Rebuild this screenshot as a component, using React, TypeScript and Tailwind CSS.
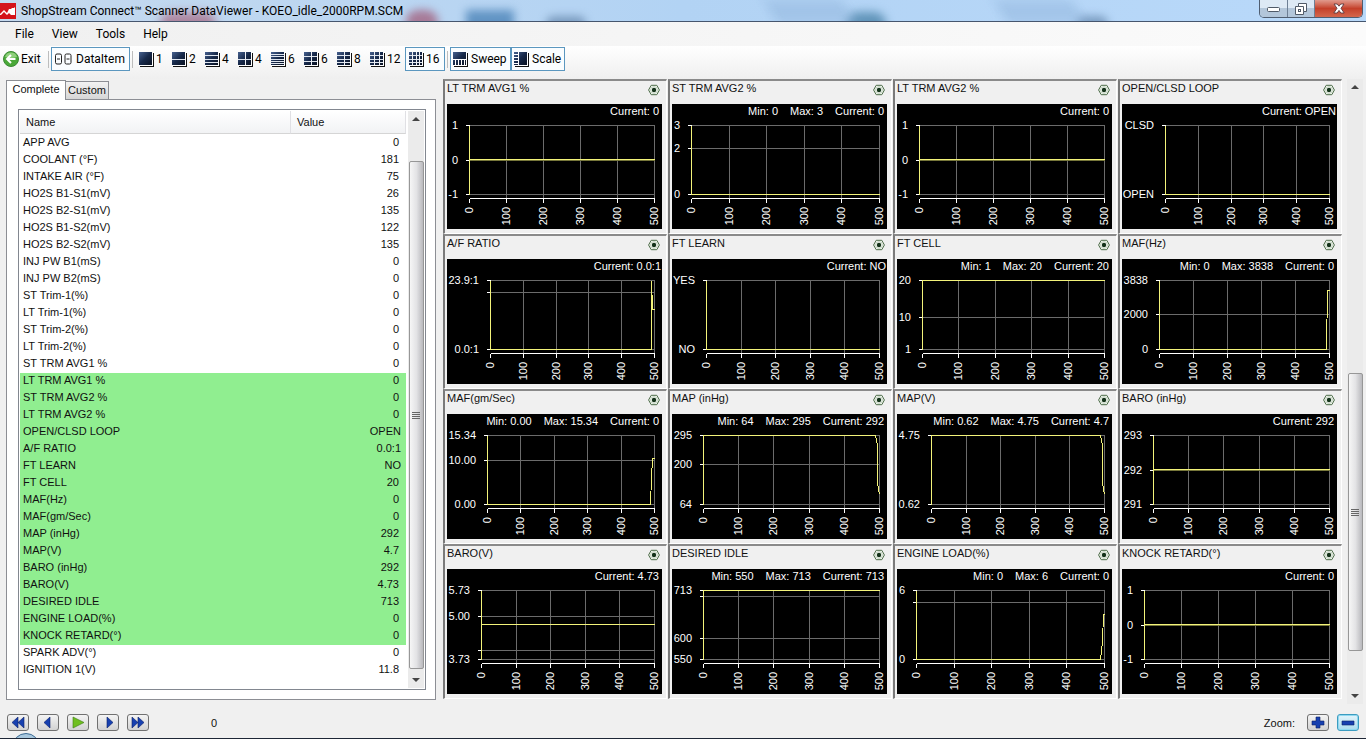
import { useState } from "react";
import type { ReactNode } from "react";

interface Tick {
  y: number;
  label?: string;
}

interface ChartData {
  title: string;
  min?: string;
  max?: string;
  current: string;
  left: number;
  ticks: Tick[];
  trace: string;
  thick?: boolean;
}

const RIGHT = 207;

const CHARTS: ChartData[] = [
  { title: "LT TRM AVG1 %", current: "0", left: 22, ticks: [{ y: 21, label: "1" }, { y: 56, label: "0" }, { y: 90, label: "-1" }], trace: "H207", thick: true },
  { title: "ST TRM AVG2 %", min: "0", max: "3", current: "0", left: 19, ticks: [{ y: 21, label: "3" }, { y: 44, label: "2" }, { y: 90, label: "0" }], trace: "V90 H207" },
  { title: "LT TRM AVG2 %", current: "0", left: 22, ticks: [{ y: 21, label: "1" }, { y: 56, label: "0" }, { y: 90, label: "-1" }], trace: "H207", thick: true },
  { title: "OPEN/CLSD LOOP", current: "OPEN", left: 43, ticks: [{ y: 21, label: "CLSD" }, { y: 90, label: "OPEN" }], trace: "V90 H207" },
  { title: "A/F RATIO", current: "0.0:1", left: 43, ticks: [{ y: 21, label: "23.9:1" }, { y: 33 }, { y: 90, label: "0.0:1" }], trace: "V90 H204 V21 V36 H205 V50 H207" },
  { title: "FT LEARN", current: "NO", left: 34, ticks: [{ y: 21, label: "YES" }, { y: 90, label: "NO" }], trace: "V90 H207" },
  { title: "FT CELL", min: "1", max: "20", current: "20", left: 25, ticks: [{ y: 21, label: "20" }, { y: 58, label: "10" }, { y: 90, label: "1" }], trace: "V21 H207" },
  { title: "MAF(Hz)", min: "0", max: "3838", current: "0", left: 37, ticks: [{ y: 21, label: "3838" }, { y: 55, label: "2000" }, { y: 90, label: "0" }], trace: "V90 H204 L205 31 H207" },
  { title: "MAF(gm/Sec)", min: "0.00", max: "15.34", current: "0", left: 40, ticks: [{ y: 21, label: "15.34" }, { y: 46, label: "10.00" }, { y: 90, label: "0.00" }], trace: "V90 H203 L204 63 L205 44 H207" },
  { title: "MAP (inHg)", min: "64", max: "295", current: "292", left: 31, ticks: [{ y: 21, label: "295" }, { y: 50, label: "200" }, { y: 90, label: "64" }], trace: "V21 H203 L205 31 L205 69 L207 80" },
  { title: "MAP(V)", min: "0.62", max: "4.75", current: "4.7", left: 34, ticks: [{ y: 21, label: "4.75" }, { y: 90, label: "0.62" }], trace: "V21 H203 L205 31 L205 69 L207 80" },
  { title: "BARO (inHg)", current: "292", left: 31, ticks: [{ y: 21, label: "293" }, { y: 56, label: "292" }, { y: 90, label: "291" }], trace: "H207", thick: true },
  { title: "BARO(V)", current: "4.73", left: 34, ticks: [{ y: 21, label: "5.73" }, { y: 47, label: "5.00" }, { y: 81 }, { y: 90, label: "3.73" }], trace: "V55 H207" },
  { title: "DESIRED IDLE", min: "550", max: "713", current: "713", left: 31, ticks: [{ y: 21, label: "713" }, { y: 27 }, { y: 69, label: "600" }, { y: 90, label: "550" }], trace: "V21 H207" },
  { title: "ENGINE LOAD(%)", min: "0", max: "6", current: "0", left: 19, ticks: [{ y: 21, label: "6" }, { y: 33 }, { y: 90, label: "0" }], trace: "V90 H203 L205 72 L206 45 H207" },
  { title: "KNOCK RETARD(°)", current: "0", left: 22, ticks: [{ y: 21, label: "1" }, { y: 56, label: "0" }, { y: 90, label: "-1" }], trace: "H207", thick: true },
];

const ROWS: [string, string][] = [
  ["APP AVG", "0"],
  ["COOLANT (°F)", "181"],
  ["INTAKE AIR (°F)", "75"],
  ["HO2S B1-S1(mV)", "26"],
  ["HO2S B2-S1(mV)", "135"],
  ["HO2S B1-S2(mV)", "122"],
  ["HO2S B2-S2(mV)", "135"],
  ["INJ PW B1(mS)", "0"],
  ["INJ PW B2(mS)", "0"],
  ["ST Trim-1(%)", "0"],
  ["LT Trim-1(%)", "0"],
  ["ST Trim-2(%)", "0"],
  ["LT Trim-2(%)", "0"],
  ["ST TRM AVG1 %", "0"],
  ["LT TRM AVG1 %", "0"],
  ["ST TRM AVG2 %", "0"],
  ["LT TRM AVG2 %", "0"],
  ["OPEN/CLSD LOOP", "OPEN"],
  ["A/F RATIO", "0.0:1"],
  ["FT LEARN", "NO"],
  ["FT CELL", "20"],
  ["MAF(Hz)", "0"],
  ["MAF(gm/Sec)", "0"],
  ["MAP (inHg)", "292"],
  ["MAP(V)", "4.7"],
  ["BARO (inHg)", "292"],
  ["BARO(V)", "4.73"],
  ["DESIRED IDLE", "713"],
  ["ENGINE LOAD(%)", "0"],
  ["KNOCK RETARD(°)", "0"],
  ["SPARK ADV(°)", "0"],
  ["IGNITION 1(V)", "11.8"],
];

const LAYOUTS = [
  { label: "1", rows: 1, cols: 1 },
  { label: "2", rows: 2, cols: 1 },
  { label: "4", rows: 4, cols: 1 },
  { label: "4", rows: 2, cols: 2 },
  { label: "6", rows: 6, cols: 1 },
  { label: "6", rows: 3, cols: 2 },
  { label: "8", rows: 4, cols: 2 },
  { label: "12", rows: 4, cols: 3 },
];

function splits(n: number) {
  return Array.from({ length: n - 1 }, (_, i) => Math.round(((i + 1) * 13) / n));
}

function IconFrame({ children }: { children?: ReactNode }) {
  return (
    <svg width="15" height="15" viewBox="0 0 15 15" shapeRendering="crispEdges" className="shrink-0">
      <defs>
        <linearGradient id="navy" x1="0" y1="0" x2="1" y2="1">
          <stop offset="0" stopColor="#47618f" />
          <stop offset="0.5" stopColor="#17294a" />
          <stop offset="1" stopColor="#0a1222" />
        </linearGradient>
      </defs>
      <rect x="0" y="0" width="13" height="13" fill="url(#navy)" />
      {children}
      <path d="M13.5 0V13.5H0" stroke="#fff" fill="none" />
      <path d="M14.5 1V14.5H1" stroke="#111" fill="none" />
    </svg>
  );
}

function GridIcon({ rows, cols }: { rows: number; cols: number }) {
  return (
    <IconFrame>
      {splits(rows).map((y) => (
        <rect key={`r${y}`} x="0" y={y} width="13" height="1" fill="#dfe5ee" />
      ))}
      {splits(cols).map((x) => (
        <rect key={`c${x}`} x={x} y="0" width="1" height="13" fill="#eef1f6" />
      ))}
    </IconFrame>
  );
}

function HexIcon() {
  return (
    <svg width="12" height="12" viewBox="0 0 12 12">
      <path d="M3.200 1.300H8.800L11.400 6L8.800 10.700H3.200L.6 6Z" fill="#f6faf4" stroke="#4c6b48" />
      <circle cx="6" cy="6" r="3.400" fill="none" stroke="#9db79a" strokeWidth=".6" />
      <circle cx="6" cy="6" r="2.200" fill="#14331a" />
    </svg>
  );
}

function Plot({ chart }: { chart: ChartData }) {
  const { left, ticks, trace, thick } = chart;
  const xs = [0, 1, 2, 3, 4, 5].map((i) => Math.round(left + ((RIGHT - left) * i) / 5));
  const start = thick ? `M${left} 21 V90 M${left} 55` : `M${left} 21 V90`;
  return (
    <svg viewBox="0 14 215 111" className="block w-full" fill="none">
      <g shapeRendering="crispEdges" transform="translate(.5 .5)">
        {xs.slice(1).map((x) => (
          <path key={x} d={`M${x} 21V94`} stroke="#6b6b6b" />
        ))}
        {ticks.map((t) => (
          <path key={t.y} d={`M${left} ${t.y}H${RIGHT}`} stroke="#6b6b6b" />
        ))}
        {ticks.map((t) => (
          <path key={t.y} d={`M${left - 4} ${t.y}H${left}`} stroke="#fff" />
        ))}
        <path d={`M${left} 94H${RIGHT}`} stroke="#fff" />
        {xs.map((x) => (
          <path key={x} d={`M${x} 94V98`} stroke="#fff" />
        ))}
        {thick && <path d={`M${left} 56H${RIGHT}`} stroke="#77773a" />}
        <path d={`${start} ${trace}`} stroke="#f3f37a" />
      </g>
      <g className="fill-white text-[11px]">
        {ticks.map(
          (t) =>
            t.label && (
              <text key={t.y} x={left - 11} y={t.y + 4} textAnchor="end">
                {t.label}
              </text>
            ),
        )}
        {xs.map((x, i) => (
          <text key={x} transform={`translate(${x + 4} 103) rotate(-90)`} textAnchor="end">
            {i * 100}
          </text>
        ))}
      </g>
    </svg>
  );
}

function ChartCell({ chart }: { chart: ChartData }) {
  return (
    <section className="ml-px border-t-2 border-l-2 border-r border-b border-t-[#8a8a8a] border-l-[#7a7a7a] border-r-white border-b-white bg-[#f0f0f0] pr-1 pb-1 pl-0.5">
      <header className="flex h-[23px] items-start justify-between pr-0.5">
        <h2 className="leading-[14px]">{chart.title}</h2>
        <button aria-label={`${chart.title} options`} className="mt-[3px]">
          <HexIcon />
        </button>
      </header>
      <div className="bg-black">
        <div className={`flex h-3.5 justify-end gap-3 leading-[15px] text-white ${/OPEN|NO|:/.test(chart.current) ? "pr-px" : "pr-[3px]"}`}>
          {chart.min && <span>Min: {chart.min}</span>}
          {chart.max && <span>Max: {chart.max}</span>}
          <span>Current: {chart.current}</span>
        </div>
        <Plot chart={chart} />
      </div>
    </section>
  );
}

function Arrow({ down }: { down?: boolean }) {
  return (
    <svg width="8" height="4" viewBox="0 0 8 4">
      <path d={down ? "M0 0H8L4 4Z" : "M0 4H8L4 0Z"} fill="#444" />
    </svg>
  );
}

function ScrollBar({ before, thumb, className }: { before: string; thumb: string; className: string }) {
  return (
    <div className={`flex w-4 shrink-0 flex-col items-center bg-[#ebebeb] ${className}`}>
      <button aria-label="Scroll up" className="flex h-4 w-full shrink-0 items-center justify-center">
        <Arrow />
      </button>
      <div className={before} />
      <div className={`flex w-[15px] flex-col items-center justify-center gap-px rounded-[2px] border border-[#979797] bg-linear-to-r from-[#f6f6f6] via-[#e3e3e5] to-[#b9b9bd] ${thumb}`}>
        <span className="h-px w-2 bg-[#666]" />
        <span className="h-px w-2 bg-[#666]" />
        <span className="h-px w-2 bg-[#666]" />
        <span className="h-px w-2 bg-[#666]" />
      </div>
      <button aria-label="Scroll down" className="mt-auto flex h-4 w-full shrink-0 items-center justify-center">
        <Arrow down />
      </button>
    </div>
  );
}

function TitleBar() {
  return (
    <div className="relative flex h-[22px] items-start overflow-hidden border-b border-[#46566e] bg-linear-to-r from-[#c5d9ee] via-[#b2d3f4] to-[#b9d9fa] font-['Roboto',sans-serif]">
      <div className="absolute top-3 left-40 h-6 w-14 rounded-full bg-[#a0506a]/60 blur-[5px]" />
      <div className="absolute top-2.5 left-[406px] h-6 w-8 rounded-full bg-[#9b3e5c]/60 blur-[4px]" />
      <div className="absolute top-2.5 left-[466px] h-6 w-12 bg-[#3d79b0]/70 blur-[4px]" />
      <div className="absolute top-4 left-[546px] h-4 w-10 rounded-full bg-[#55789f]/60 blur-[4px]" />
      <div className="absolute top-3 left-[846px] h-6 w-10 rounded-full bg-[#3d79a0]/70 blur-[5px]" />
      <div className="absolute top-4 left-[1076px] h-4 w-8 rounded-full bg-[#55789f]/60 blur-[4px]" />
      <div className="absolute top-0 left-[770px] h-6 w-20 skew-x-[30deg] bg-[#8fb4dc]/50 blur-[6px]" />
      <div className="absolute top-0 left-[1000px] h-6 w-20 skew-x-[30deg] bg-[#8fb4dc]/50 blur-[6px]" />
      <svg width="16" height="16" viewBox="0 0 16 16" className="relative mt-[3px] shrink-0">
        <rect width="16" height="16" fill="#d4121a" />
        <path d="M0 11L4 7L7 10L9 6H11L12 5H14L15 4V12H11L9 10L7 12L4 9L1 12H0Z" fill="#fff" />
      </svg>
      <h1 className="relative ml-[5px] text-[12px] leading-[22px] text-black">
        ShopStream Connect™ Scanner DataViewer - KOEO_idle_2000RPM.SCM
      </h1>
      <div className="relative mr-[3px] ml-auto flex h-[18px] overflow-hidden rounded-b-[5px] border border-t-0 border-[#4f5d70]">
        <button aria-label="Minimize" className="flex w-7 items-center justify-center border-r border-[#6d7f95] bg-linear-to-b from-[#dde9f5] from-50% to-[#b3c6da] to-50%">
          <svg width="13" height="6" viewBox="0 0 13 6" className="mt-0.5">
            <rect x=".5" y=".5" width="12" height="4" rx="1" fill="#fff" stroke="#505a68" />
          </svg>
        </button>
        <button aria-label="Restore" className="flex w-[27px] items-center justify-center border-r border-[#6d7f95] bg-linear-to-b from-[#dde9f5] from-50% to-[#b3c6da] to-50%">
          <svg width="12" height="12" viewBox="0 0 12 12" fill="none" stroke="#505a68">
            <path d="M3.500 .5H11.500V8.500H8.500V11.500H.5V3.500H3.500Z" fill="#fff" />
            <path d="M3.500 3.500H8.500V8.500" />
            <rect x="3.500" y="6.500" width="2" height="2" />
          </svg>
        </button>
        <button aria-label="Close" className="flex w-[47px] items-center justify-center bg-linear-to-b from-[#e09a8d] via-[#c4402a] via-50% to-[#d4664c]">
          <svg width="12" height="11" viewBox="0 0 12 11">
            <path d="M1 1H4.200L6 3.200L7.800 1H11L8 5.300L11.200 10H7.800L6 7.400L4.200 10H.8L4 5.300Z" fill="#fff" stroke="#5c3a40" strokeWidth=".9" />
          </svg>
        </button>
      </div>
    </div>
  );
}

function Separator() {
  return <span className="mx-0.5 h-[17px] w-px bg-[#bdbdbd]" />;
}

const TOGGLED = "flex h-6 items-center border border-[#5b97bf] bg-[#fafdff]";

function Toolbar() {
  return (
    <div className="flex h-[33px] items-start bg-linear-to-b from-white to-[#efefef] pt-px pl-[3px] font-['Roboto',sans-serif] text-[12px] text-black">
      <div className="flex h-6 items-center">
        <button className="flex w-[43px] items-center gap-0.5">
          <svg width="16" height="16" viewBox="0 0 16 16" className="shrink-0">
            <circle cx="8" cy="8" r="7.500" fill="#4aa838" stroke="#3b8a35" />
            <path d="M2 6A6.300 6.300 0 0 1 14 6Q8 8 2 6Z" fill="#8fd07c" />
            <path d="M12.500 8H4.500M8 4L4 8L8 12" stroke="#fff" strokeWidth="2" fill="none" />
          </svg>
          Exit
        </button>
        <Separator />
        <button className={`${TOGGLED} w-[79px] gap-1 pl-[3px]`}>
          <svg width="17" height="12" viewBox="0 0 17 12" fill="none" stroke="#222" className="shrink-0">
            <rect x=".5" y="1" width="6" height="10" rx="1.500" />
            <rect x="10" y="1" width="6" height="10" rx="1.500" />
            <path d="M2 6H5M11.500 6H14.500" />
          </svg>
          DataItem
        </button>
        <Separator />
        <div className="flex items-center pr-0.5 pl-1">
          {LAYOUTS.map((l, i) => (
            <button key={i} className="flex w-[33px] items-center gap-0.5">
              <GridIcon rows={l.rows} cols={l.cols} />
              {l.label}
            </button>
          ))}
        </div>
        <button className={`${TOGGLED} w-10 gap-0.5 pl-[3px]`}>
          <GridIcon rows={4} cols={4} />
          16
        </button>
        <Separator />
        <button className={`${TOGGLED} w-[61px] gap-[3px] pl-0.5`}>
          <IconFrame>
            <path d="M0 7.500H13M2.500 8V13M5.500 8V13M8.500 8V13M11.500 8V13" stroke="#fff" />
          </IconFrame>
          Sweep
        </button>
        <button className={`${TOGGLED} w-[54px] gap-[3px] pl-0.5`}>
          <IconFrame>
            <path d="M4.500 0V13M0 2.500H4M0 5.500H4M0 8.500H4M0 11.500H4" stroke="#fff" />
          </IconFrame>
          Scale
        </button>
      </div>
    </div>
  );
}

function DataList() {
  return (
    <div className="flex flex-1 border border-[#828790] bg-white p-px">
      <div className="min-w-0 flex-1">
        <table className="w-full table-fixed border-separate border-spacing-0 text-left">
          <thead>
            <tr className="h-[23px] bg-linear-to-b from-white to-[#f1f2f4]">
              <th className="w-[271px] border-r border-b border-r-[#e0e0e4] border-b-[#d5d5d5] p-0 pl-1.5 font-normal">Name</th>
              <th className="border-r border-b border-r-[#e0e0e4] border-b-[#d5d5d5] p-0 pl-1.5 font-normal">Value</th>
            </tr>
          </thead>
          <tbody className="before:block before:h-px">
            {ROWS.map(([name, value], i) => (
              <tr key={name} className={i > 13 && i < 30 ? "h-[17px] bg-[#90ee90]" : "h-[17px]"}>
                <td className="p-0 pl-[3px] align-top leading-[14px]">{name}</td>
                <td className={`p-0 text-right align-top leading-[14px] ${/OPEN|NO|:/.test(value) ? "pr-[5px]" : "pr-[7px]"}`}>{value}</td>
              </tr>
            ))}
          </tbody>
        </table>
      </div>
      <ScrollBar className="ml-0.5" before="h-[34px] shrink-0" thumb="h-[508px] shrink-0" />
    </div>
  );
}

function PushButton({ label, active, children }: { label: string; active?: boolean; children: ReactNode }) {
  return (
    <button
      aria-label={label}
      className={`flex h-[17px] w-[22px] items-center justify-center rounded-[3px] border bg-linear-to-b ${
        active ? "border-[#3c9cc0] from-[#e3f4fb] to-[#a9dbee] ring-1 ring-[#8fd8f0] ring-inset" : "border-[#707070] from-[#f4f4f4] to-[#d2d2d2]"
      }`}
    >
      <svg width="14" height="13" viewBox="0 0 14 13" fill="#1740b0" stroke="#0a1f66" strokeWidth=".6">
        {children}
      </svg>
    </button>
  );
}

function Footer() {
  return (
    <footer className="relative flex h-[35px] items-start gap-2 overflow-hidden border-b border-[#1d2636] pt-2.5 pr-[7px] pl-[7px]">
      <div className="absolute top-[29px] left-3 h-7 w-7 rounded-full border border-[#3c6b94] bg-[#a9c8de]" />
      <PushButton label="Rewind">
        <path d="M7 1V12L1 6.500ZM13 1V12L7 6.500Z" />
      </PushButton>
      <PushButton label="Step back">
        <path d="M9 1V12L3 6.500Z" />
      </PushButton>
      <PushButton label="Play">
        <path d="M2 1L13 6.500L2 12Z" fill="#6fbf1f" stroke="#3d7a14" />
      </PushButton>
      <PushButton label="Step forward">
        <path d="M6 1V12L12 6.500Z" />
      </PushButton>
      <PushButton label="Fast forward">
        <path d="M1 1V12L7 6.500ZM7 1V12L13 6.500Z" />
      </PushButton>
      <output className="ml-[54px] leading-[18px]">0</output>
      <div className="ml-auto flex gap-2">
        <span className="mr-1 leading-[18px]">Zoom:</span>
        <PushButton label="Zoom in">
          <path d="M5 1H9V5H13V9H9V12H5V9H1V5H5Z" />
        </PushButton>
        <PushButton label="Zoom out" active>
          <path d="M1 5H13V9H1Z" />
        </PushButton>
      </div>
    </footer>
  );
}

export default function App() {
  const [tab, setTab] = useState("Complete");
  return (
    <div className="flex min-h-screen flex-col bg-[#f0f0f0] font-['Liberation_Sans',Arial,sans-serif] text-[11px] text-[#111]">
      <TitleBar />
      <nav className="flex h-6 items-center gap-[18px] bg-linear-to-r from-[#f0f0f0] to-[#fbfbfb] pl-[15px] font-['Roboto',sans-serif] text-[12px] text-black">
        <button>File</button>
        <button>View</button>
        <button>Tools</button>
        <button>Help</button>
      </nav>
      <Toolbar />
      <main className="flex flex-1">
        <div className="flex w-[442px] shrink-0 flex-col pr-1.5 pb-1 pl-1.5">
          <div role="tablist" className="flex h-5 items-end">
            {["Complete", "Custom"].map((t) => (
              <button
                key={t}
                role="tab"
                aria-selected={tab === t}
                onClick={() => setTab(t)}
                className={
                  tab === t
                    ? "relative -mb-px h-5 w-[60px] shrink-0 border border-b-0 border-[#8c8e94] bg-white pb-0.5"
                    : "h-[18px] w-[43px] border border-b-0 border-l-0 border-[#8c8e94] bg-linear-to-b from-[#f2f2f2] to-[#d6d6d6]"
                }
              >
                {t}
              </button>
            ))}
          </div>
          <div className="flex flex-1 border border-[#8c8e94] bg-white py-[9px] pr-[9px] pl-[11px]">
            <DataList />
          </div>
        </div>
        <div className="grid flex-1 grid-cols-4 content-start">
          {CHARTS.map((c) => (
            <ChartCell key={c.title} chart={c} />
          ))}
        </div>
        <ScrollBar className="mr-[3px] ml-[5px]" before="h-[278px] shrink-0" thumb="h-[278px] shrink-0" />
      </main>
      <Footer />
    </div>
  );
}
